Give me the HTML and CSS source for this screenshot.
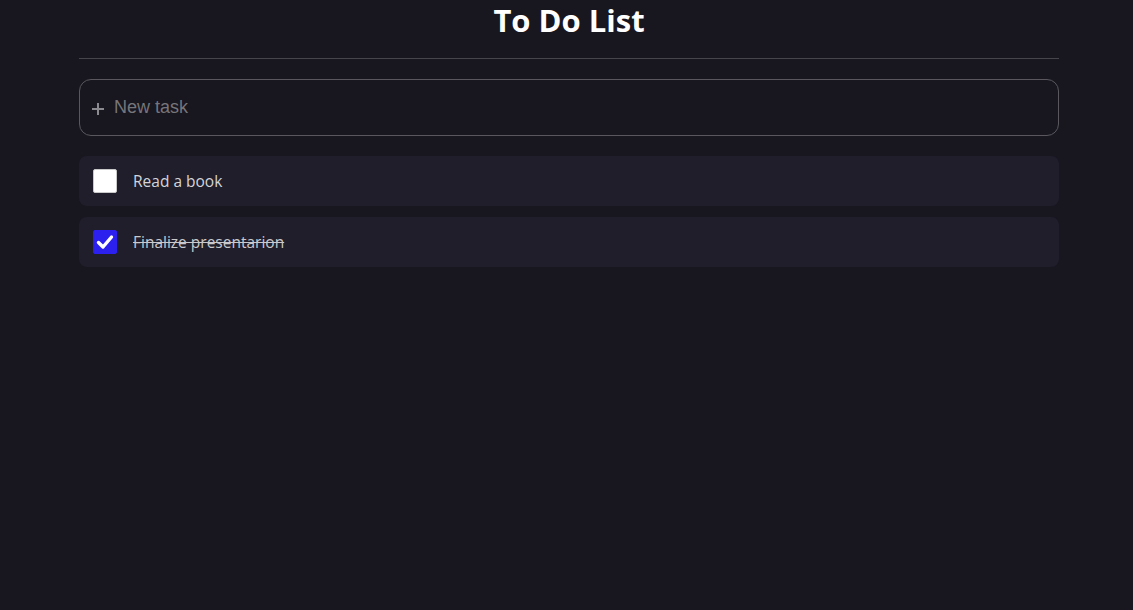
FILE: index.html
```html
<!DOCTYPE html>
<html lang="en">
<head>
<meta charset="utf-8">
<title>To Do List</title>
<link rel="stylesheet" href="styles.css">
</head>
<body>
<main class="app">
  <h1 class="title">To Do List</h1>
  <hr class="divider">
  <label class="new-task">
    <svg class="plus" width="14" height="14" viewBox="0 0 14 14"><path d="M7 1v12M1 7h12" stroke="#8a8a8f" stroke-width="2" fill="none"/></svg>
    <input class="new-input" type="text" placeholder="New task">
  </label>
  <ul class="tasks">
    <li class="task">
      <span class="box"></span>
      <span class="task-text">Read a book</span>
    </li>
    <li class="task done">
      <span class="box checked">
        <svg width="24" height="24" viewBox="0 0 24 24"><path d="M5.5 12.5l4.5 4.5 8.5-10" stroke="#fff" stroke-width="3.4" fill="none" stroke-linecap="round" stroke-linejoin="round"/></svg>
      </span>
      <span class="task-text">Finalize presentarion</span>
    </li>
  </ul>
</main>
</body>
</html>
```
FILE: styles.css
```css
html, body {
  margin: 0;
  padding: 0;
  background: #18161f;
  height: 100%;
}
body {
  font-family: "Open Sans", "Noto Sans", sans-serif;
  color: #fff;
  padding-left: 5px;
  box-sizing: border-box;
}
.app {
  width: 980px;
  margin: 0 auto;
}
.title {
  margin: 0;
  padding-top: 1px;
  height: 44px;
  text-align: center;
  font-size: 31px;
  font-weight: 700;
  line-height: 38px;
  color: #fff;
}
.divider {
  margin: 13px 0 20px;
  border: 0;
  border-top: 1px solid #47454c;
  height: 0;
}
.new-task {
  display: flex;
  align-items: center;
  box-sizing: border-box;
  height: 57px;
  border: 1px solid #5a585e;
  border-radius: 12px;
  padding: 0 11px;
  gap: 9px;
}
.plus {
  margin-top: 2px;
  flex: none;
}
.new-input {
  flex: 1;
  background: transparent;
  border: 0;
  outline: none;
  color: #ddd;
  font-family: "Liberation Sans", Arial, sans-serif;
  font-size: 18px;
  padding: 0;
}
.new-input::placeholder {
  color: #76757a;
}
.tasks {
  list-style: none;
  margin: 20px 0 0;
  padding: 0;
  display: flex;
  flex-direction: column;
  gap: 11px;
}
.task {
  display: flex;
  align-items: center;
  height: 50px;
  background: #201e2b;
  border-radius: 8px;
  padding: 0 14px;
  gap: 16px;
}
.box {
  width: 22px;
  height: 22px;
  border: 1px solid #c9c9c9;
  border-radius: 2px;
  background: #fff;
  flex: none;
}
.box.checked {
  background: #2b20ee;
  border-color: #2b20ee;
  position: relative;
}
.box.checked svg {
  position: absolute;
  left: -1px;
  top: -1px;
}
.task-text {
  font-size: 15.5px;
  color: #d4d4d8;
}
.done .task-text {
  text-decoration: line-through;
  color: #c9c9cd;
}
```
